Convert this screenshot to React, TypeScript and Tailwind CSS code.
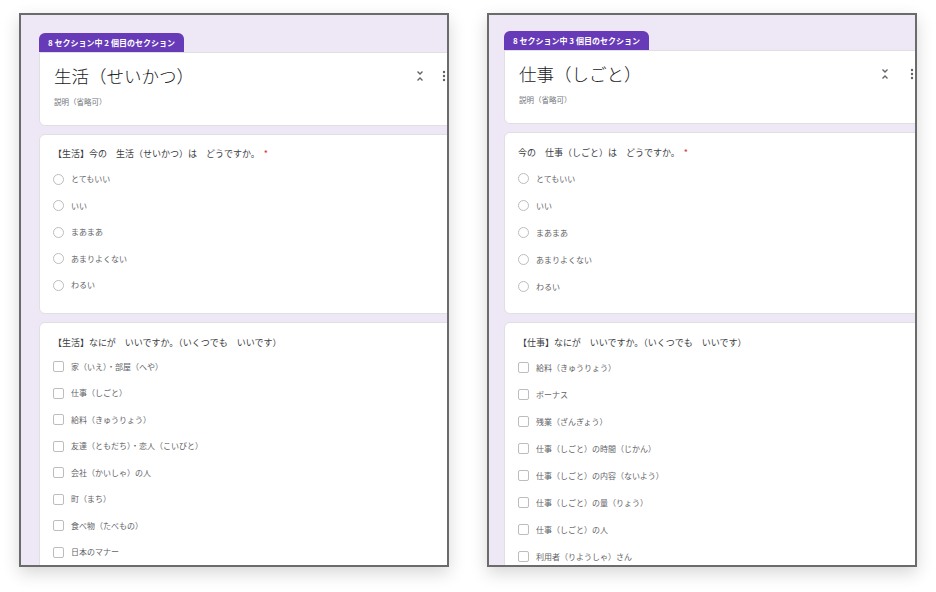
import React from "react";

type Panel = {
  badge: string;
  title: string;
  padL: string;
  padT: string;
  q1: string;
  q1Pt: string;
  q1Pb: string;
  q2: string;
  q2Pt: string;
  rowH: string;
  dotGap: string;
  radios: string[];
  checks: string[];
};

const FONT = { fontFamily: '"Noto Sans CJK JP", "Noto Sans", sans-serif' };

function Radio() {
  return <span className="w-[11px] h-[11px] rounded-full border-[1.5px] border-[#bdbdbd] shrink-0" />;
}
function Check() {
  return <span className="w-[11px] h-[11px] rounded-[2px] border-[1.5px] border-[#bdbdbd] shrink-0" />;
}

function UnfoldLess() {
  return (
    <svg width="10" height="12" viewBox="0 0 10 12" className="shrink-0">
      <path d="M2.5 1.5 L5 4 L7.5 1.5" fill="none" stroke="#5f6368" strokeWidth="1.3" />
      <path d="M2.5 10.5 L5 8 L7.5 10.5" fill="none" stroke="#5f6368" strokeWidth="1.3" />
    </svg>
  );
}
function Dots() {
  return (
    <svg width="4" height="12" viewBox="0 0 4 12" className="shrink-0">
      <circle cx="2" cy="2" r="1.2" fill="#5f6368" />
      <circle cx="2" cy="6" r="1.2" fill="#5f6368" />
      <circle cx="2" cy="10" r="1.2" fill="#5f6368" />
    </svg>
  );
}

function FormPanel({ p }: { p: Panel }) {
  return (
    <div className="w-[430px] h-[554px] border-2 border-[#6b6b6b] bg-[#ede7f6] overflow-hidden shadow-[0_6px_16px_rgba(0,0,0,0.16)] shrink-0">
      <div className={`${p.padL} ${p.padT} w-[470px] flex flex-col`}>
        <div className="flex">
          <div className="h-[19px] px-[9px] flex items-center rounded-t-[6px] bg-[#673ab7] text-white text-[8px] font-bold leading-none">
            {p.badge}
          </div>
        </div>
        <div className="bg-white rounded-b-[6px] rounded-tr-[6px] border border-[#e0e0e0] h-[74px] pl-[14px] pt-[12px] flex flex-col">
          <div className="flex items-center">
            <div className="text-[17.5px] leading-[22px] font-light text-[#202124] w-[361px]">{p.title}</div>
            <UnfoldLess />
            <div className={p.dotGap} />
            <Dots />
          </div>
          <div className="text-[7.5px] leading-[12px] text-[#70757a] mt-[9px]">説明（省略可）</div>
        </div>

        <div className={`mt-[8px] bg-white rounded-[6px] border border-[#e0e0e0] pl-[13px] ${p.q1Pt} ${p.q1Pb}`}>
          <div className="text-[9px] leading-[14px] text-[#3c4043] mb-[5px]">
            {p.q1}
            <span className="text-[#d93025] ml-[4px]">*</span>
          </div>
          {p.radios.map((r) => (
            <div key={r} className={`${p.rowH} flex items-center gap-[7px]`}>
              <Radio />
              <span className="text-[8px] text-[#5f6368]">{r}</span>
            </div>
          ))}
        </div>

        <div className={`mt-[8px] bg-white rounded-t-[6px] border border-[#e0e0e0] pl-[13px] ${p.q2Pt} h-[300px]`}>
          <div className="text-[9px] leading-[14px] text-[#3c4043] mb-[4px]">{p.q2}</div>
          {p.checks.map((r) => (
            <div key={r} className={`${p.rowH} flex items-center gap-[7px]`}>
              <Check />
              <span className="text-[8px] text-[#5f6368]">{r}</span>
            </div>
          ))}
        </div>
      </div>
    </div>
  );
}

const radios = ["とてもいい", "いい", "まあまあ", "あまりよくない", "わるい"];

const left: Panel = {
  badge: "8 セクション中 2 個目のセクション",
  title: "生活（せいかつ）",
  padL: "pl-[18px]",
  padT: "pt-[18px]",
  q1: "【生活】今の　生活（せいかつ）は　どうですか。",
  q1Pt: "pt-[12px]",
  q1Pb: "pb-[14px]",
  q2: "【生活】なにが　いいですか。（いくつでも　いいです）",
  q2Pt: "pt-[13px]",
  rowH: "h-[26.5px]",
  dotGap: "w-[17px]",
  radios,
  checks: [
    "家（いえ）・部屋（へや）",
    "仕事（しごと）",
    "給料（きゅうりょう）",
    "友達（ともだち）・恋人（こいびと）",
    "会社（かいしゃ）の人",
    "町（まち）",
    "食べ物（たべもの）",
    "日本のマナー",
  ],
};

const right: Panel = {
  badge: "8 セクション中 3 個目のセクション",
  title: "仕事（しごと）",
  padL: "pl-[15px]",
  padT: "pt-[16px]",
  q1: "今の　仕事（しごと）は　どうですか。",
  q1Pt: "pt-[13px]",
  q1Pb: "pb-[13px]",
  q2: "【仕事】なにが　いいですか。（いくつでも　いいです）",
  q2Pt: "pt-[13px]",
  rowH: "h-[27px]",
  dotGap: "w-[20px]",
  radios,
  checks: [
    "給料（きゅうりょう）",
    "ボーナス",
    "残業（ざんぎょう）",
    "仕事（しごと）の時間（じかん）",
    "仕事（しごと）の内容（ないよう）",
    "仕事（しごと）の量（りょう）",
    "仕事（しごと）の人",
    "利用者（りようしゃ）さん",
  ],
};

export default function App() {
  return (
    <div className="w-[936px] h-[592px] bg-white overflow-hidden" style={FONT}>
      <div className="flex gap-[38px] pl-[19px] pt-[13px]">
        <FormPanel p={left} />
        <FormPanel p={right} />
      </div>
    </div>
  );
}
